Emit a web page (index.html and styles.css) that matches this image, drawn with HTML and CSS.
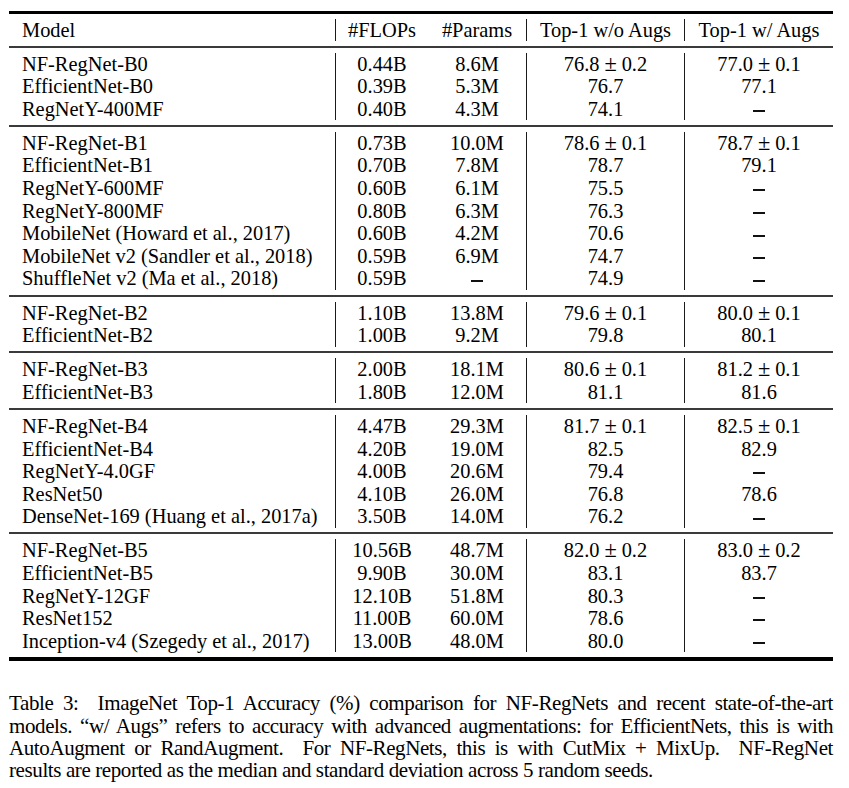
FILE: index.html
```html
<!DOCTYPE html>
<html lang="en">
<head>
<meta charset="utf-8">
<title>Table 3</title>
<link rel="stylesheet" href="styles.css">
</head>
<body>
<div class="page">
  <div class="rule-top"></div>
  <table class="tbl">
    <colgroup>
      <col class="c1"><col class="c2"><col class="c3"><col class="c4"><col class="c5">
    </colgroup>
    <thead>
      <tr class="row">
        <td class="name">Model</td><td class="v">#FLOPs</td><td>#Params</td><td class="v">Top-1 w/o Augs</td><td class="v">Top-1 w/ Augs</td>
      </tr>
      <tr class="sep"><td colspan="5"><div class="rule"></div></td></tr>
    </thead>
    <tbody>
      <tr class="row"><td class="name">NF-RegNet-B0</td><td class="v">0.44B</td><td>8.6M</td><td class="v">76.8<span class="pm">±</span>0.2</td><td class="v">77.0<span class="pm">±</span>0.1</td></tr>
      <tr class="row"><td class="name">EfficientNet-B0</td><td class="v">0.39B</td><td>5.3M</td><td class="v">76.7</td><td class="v">77.1</td></tr>
      <tr class="row"><td class="name">RegNetY-400MF</td><td class="v">0.40B</td><td>4.3M</td><td class="v">74.1</td><td class="v"><span class="na">−</span></td></tr>
      <tr class="sep"><td colspan="5"><div class="rule"></div></td></tr>

      <tr class="row"><td class="name">NF-RegNet-B1</td><td class="v">0.73B</td><td>10.0M</td><td class="v">78.6<span class="pm">±</span>0.1</td><td class="v">78.7<span class="pm">±</span>0.1</td></tr>
      <tr class="row"><td class="name">EfficientNet-B1</td><td class="v">0.70B</td><td>7.8M</td><td class="v">78.7</td><td class="v">79.1</td></tr>
      <tr class="row"><td class="name">RegNetY-600MF</td><td class="v">0.60B</td><td>6.1M</td><td class="v">75.5</td><td class="v"><span class="na">−</span></td></tr>
      <tr class="row"><td class="name">RegNetY-800MF</td><td class="v">0.80B</td><td>6.3M</td><td class="v">76.3</td><td class="v"><span class="na">−</span></td></tr>
      <tr class="row"><td class="name">MobileNet (Howard et al., 2017)</td><td class="v">0.60B</td><td>4.2M</td><td class="v">70.6</td><td class="v"><span class="na">−</span></td></tr>
      <tr class="row"><td class="name">MobileNet v2 (Sandler et al., 2018)</td><td class="v">0.59B</td><td>6.9M</td><td class="v">74.7</td><td class="v"><span class="na">−</span></td></tr>
      <tr class="row"><td class="name">ShuffleNet v2 (Ma et al., 2018)</td><td class="v">0.59B</td><td><span class="na">−</span></td><td class="v">74.9</td><td class="v"><span class="na">−</span></td></tr>
      <tr class="sep"><td colspan="5"><div class="rule"></div></td></tr>

      <tr class="row"><td class="name">NF-RegNet-B2</td><td class="v">1.10B</td><td>13.8M</td><td class="v">79.6<span class="pm">±</span>0.1</td><td class="v">80.0<span class="pm">±</span>0.1</td></tr>
      <tr class="row"><td class="name">EfficientNet-B2</td><td class="v">1.00B</td><td>9.2M</td><td class="v">79.8</td><td class="v">80.1</td></tr>
      <tr class="sep"><td colspan="5"><div class="rule"></div></td></tr>

      <tr class="row"><td class="name">NF-RegNet-B3</td><td class="v">2.00B</td><td>18.1M</td><td class="v">80.6<span class="pm">±</span>0.1</td><td class="v">81.2<span class="pm">±</span>0.1</td></tr>
      <tr class="row"><td class="name">EfficientNet-B3</td><td class="v">1.80B</td><td>12.0M</td><td class="v">81.1</td><td class="v">81.6</td></tr>
      <tr class="sep"><td colspan="5"><div class="rule"></div></td></tr>

      <tr class="row"><td class="name">NF-RegNet-B4</td><td class="v">4.47B</td><td>29.3M</td><td class="v">81.7<span class="pm">±</span>0.1</td><td class="v">82.5<span class="pm">±</span>0.1</td></tr>
      <tr class="row"><td class="name">EfficientNet-B4</td><td class="v">4.20B</td><td>19.0M</td><td class="v">82.5</td><td class="v">82.9</td></tr>
      <tr class="row"><td class="name">RegNetY-4.0GF</td><td class="v">4.00B</td><td>20.6M</td><td class="v">79.4</td><td class="v"><span class="na">−</span></td></tr>
      <tr class="row"><td class="name">ResNet50</td><td class="v">4.10B</td><td>26.0M</td><td class="v">76.8</td><td class="v">78.6</td></tr>
      <tr class="row"><td class="name">DenseNet-169 (Huang et al., 2017a)</td><td class="v">3.50B</td><td>14.0M</td><td class="v">76.2</td><td class="v"><span class="na">−</span></td></tr>
      <tr class="sep"><td colspan="5"><div class="rule"></div></td></tr>

      <tr class="row"><td class="name">NF-RegNet-B5</td><td class="v">10.56B</td><td>48.7M</td><td class="v">82.0<span class="pm">±</span>0.2</td><td class="v">83.0<span class="pm">±</span>0.2</td></tr>
      <tr class="row"><td class="name">EfficientNet-B5</td><td class="v">9.90B</td><td>30.0M</td><td class="v">83.1</td><td class="v">83.7</td></tr>
      <tr class="row"><td class="name">RegNetY-12GF</td><td class="v">12.10B</td><td>51.8M</td><td class="v">80.3</td><td class="v"><span class="na">−</span></td></tr>
      <tr class="row"><td class="name">ResNet152</td><td class="v">11.00B</td><td>60.0M</td><td class="v">78.6</td><td class="v"><span class="na">−</span></td></tr>
      <tr class="row"><td class="name">Inception-v4 (Szegedy et al., 2017)</td><td class="v">13.00B</td><td>48.0M</td><td class="v">80.0</td><td class="v"><span class="na">−</span></td></tr>
    </tbody>
  </table>
  <div class="rule-bottom"></div>

  <div class="caption">
    <span class="line">Table 3:&nbsp; ImageNet Top-1 Accuracy (%) comparison for NF-RegNets and recent state-of-the-art</span>
    <span class="line">models. “w/ Augs” refers to accuracy with advanced augmentations: for EfficientNets, this is with</span>
    <span class="line">AutoAugment or RandAugment.&nbsp; For NF-RegNets, this is with CutMix + MixUp.&nbsp; NF-RegNet</span>
    <span class="line last">results are reported as the median and standard deviation across 5 random seeds.</span>
  </div>
</div>
</body>
</html>
```

FILE: styles.css
```css
html, body {
  margin: 0;
  padding: 0;
  background: #ffffff;
}

.page {
  width: 824px;
  padding: 11px 0 0 9px;
  font-family: "Liberation Serif", "Times New Roman", serif;
  color: #000;
}

.rule-top {
  height: 3px;
  background: #000;
}

.rule-bottom {
  height: 4px;
  background: #000;
  margin-top: 5px;
}

.tbl {
  width: 824px;
  table-layout: fixed;
  border-collapse: separate;
  border-spacing: 0;
  margin-top: 4.5px;
  font-size: 20.4px;
}

.c1 { width: 326px; }
.c2 { width: 93px; }
.c3 { width: 98px; }
.c4 { width: 158px; }
.c5 { width: 149px; }

.tbl td {
  padding: 0;
  text-align: center;
  white-space: nowrap;
  vertical-align: middle;
}

.row td {
  height: 22.6px;
  line-height: 22.6px;
}

.tbl td.name {
  text-align: left;
  padding-left: 13px;
}

.tbl td.v {
  border-left: 1px solid #1a1a1a;
}

.sep td {
  height: 11.5px;
}

.rule {
  height: 2px;
  background: #3a3a3a;
  margin: 4.5px 0 5px;
}

.pm {
  margin: 0 0.22em;
  font-size: 1.1em;
}

.na {
  display: inline-block;
  width: 12px;
  height: 2px;
  background: #111;
  vertical-align: middle;
  color: transparent;
  font-size: 1px;
  line-height: 2px;
  overflow: hidden;
}

.caption {
  margin-top: 31px;
  font-size: 21px;
  line-height: 22.3px;
  letter-spacing: -0.4px;
}

.caption .line {
  display: block;
  text-align: justify;
  text-align-last: justify;
  white-space: nowrap;
}

.caption .line.last {
  text-align-last: left;
}
```
